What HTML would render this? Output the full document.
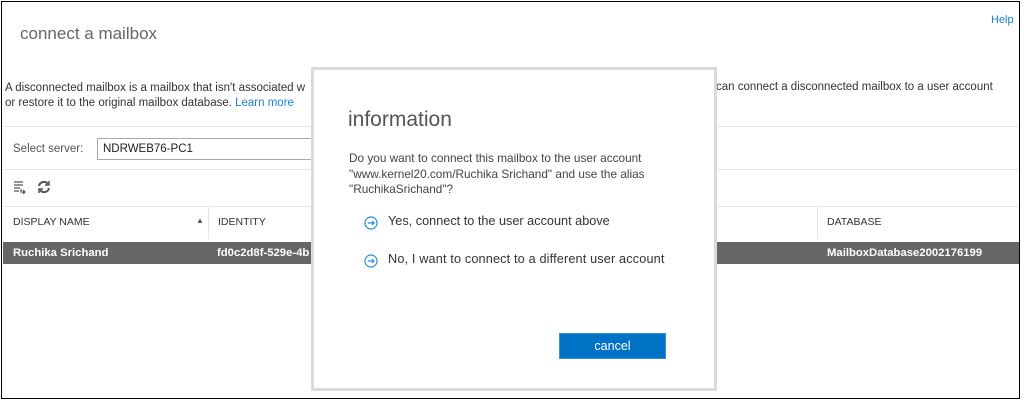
<!DOCTYPE html>
<html><head><style>
*{margin:0;padding:0;box-sizing:border-box}
body{width:1024px;height:400px;background:#fff;font-family:"Liberation Sans",sans-serif;position:relative;overflow:hidden;color:#333}
.a{position:absolute;white-space:nowrap}
.hl{position:absolute;height:1px;background:#e6e6e6}
</style></head><body>
<div class="a" style="left:1px;top:1px;width:1019px;height:398px;border:1px solid #000"></div>
<div class="a" style="left:20px;top:24px;font-size:17px;color:#666;font-weight:300">connect a mailbox</div>
<div class="a" style="left:991px;top:14px;font-size:11px;color:#1a7fd4">Help</div>
<div class="a" style="left:5px;top:81px;font-size:11.5px;color:#333;line-height:15px">A disconnected mailbox is a mailbox that isn't associated w<br>or restore it to the original mailbox database. <span style="color:#1a7fd4">Learn more</span></div>
<div class="a" style="left:716px;top:81px;font-size:11.5px;color:#333">can connect a disconnected mailbox to a user account</div>
<div class="hl" style="left:3px;top:126px;width:1016px"></div>
<div class="a" style="left:13px;top:143px;font-size:11.5px;color:#555">Select server:</div>
<div class="a" style="left:97px;top:138px;width:230px;height:22px;border:1px solid #aaa;font-size:11.5px;padding:4px 5px;color:#222">NDRWEB76-PC1</div>
<div class="hl" style="left:3px;top:169px;width:1016px"></div>
<svg class="a" style="left:13px;top:180px" width="40" height="14" viewBox="0 0 40 14"><g stroke="#555" fill="none" stroke-width="1.2"><path d="M1 2h9M1 5h9M1 8h6M1 11h5M8 9v3h4M10 10l2 2-2 2"/><path d="M35 4a5 5 0 0 0-9 2M27 10a5 5 0 0 0 9-2" stroke-width="2"/><path d="M36 1v4h-4M26 13v-4h4" stroke-width="1.5"/></g></svg>
<div class="hl" style="left:3px;top:206px;width:1016px"></div>
<div class="a" style="left:13px;top:216px;font-size:10.5px;color:#333">DISPLAY NAME</div>
<div class="a" style="left:196px;top:216px;font-size:8px;color:#555">▲</div>
<div class="a" style="left:208px;top:207px;width:1px;height:32px;background:#e6e6e6"></div>
<div class="a" style="left:218px;top:216px;font-size:10.5px;color:#333">IDENTITY</div>
<div class="a" style="left:817px;top:207px;width:1px;height:32px;background:#e6e6e6"></div>
<div class="a" style="left:827px;top:216px;font-size:10.5px;color:#333">DATABASE</div>
<div class="a" style="left:3px;top:242px;width:1016px;height:22px;background:#666"></div>
<div class="a" style="left:13px;top:247px;font-size:11.3px;color:#fff;font-weight:bold">Ruchika Srichand</div>
<div class="a" style="left:217px;top:247px;font-size:11.3px;color:#fff;font-weight:bold">fd0c2d8f-529e-4b</div>
<div class="a" style="left:827px;top:247px;font-size:11.3px;color:#fff;font-weight:bold">MailboxDatabase2002176199</div>
<div class="a" style="left:311px;top:67px;width:406px;height:324px;border:3px solid #dadada;background:#fff"></div>
<div class="a" style="left:348px;top:108px;font-size:21px;color:#555;font-weight:300">information</div>
<div class="a" style="left:349px;top:151px;font-size:11.8px;color:#444;line-height:15.5px">Do you want to connect this mailbox to the user account<br>"www.kernel20.com/Ruchika Srichand" and use the alias<br>"RuchikaSrichand"?</div>
<svg class="a" style="left:364px;top:216px" width="14" height="14"><circle cx="7" cy="7" r="6" fill="none" stroke="#2b8ad8" stroke-width="1.2"/><path d="M4 7h6M8 5l2 2-2 2" stroke="#2b8ad8" fill="none" stroke-width="1.2"/></svg>
<div class="a" style="left:388px;top:214px;font-size:12.7px;color:#333">Yes, connect to the user account above</div>
<svg class="a" style="left:364px;top:254px" width="14" height="14"><circle cx="7" cy="7" r="6" fill="none" stroke="#2b8ad8" stroke-width="1.2"/><path d="M4 7h6M8 5l2 2-2 2" stroke="#2b8ad8" fill="none" stroke-width="1.2"/></svg>
<div class="a" style="left:388px;top:252px;font-size:12.7px;color:#333;letter-spacing:0.15px">No, I want to connect to a different user account</div>
<div class="a" style="left:559px;top:333px;width:107px;height:26px;background:#0072c6;border:1px solid #3a8fd6;color:#fff;font-size:12.5px;text-align:center;line-height:24px">cancel</div>
</body></html>
